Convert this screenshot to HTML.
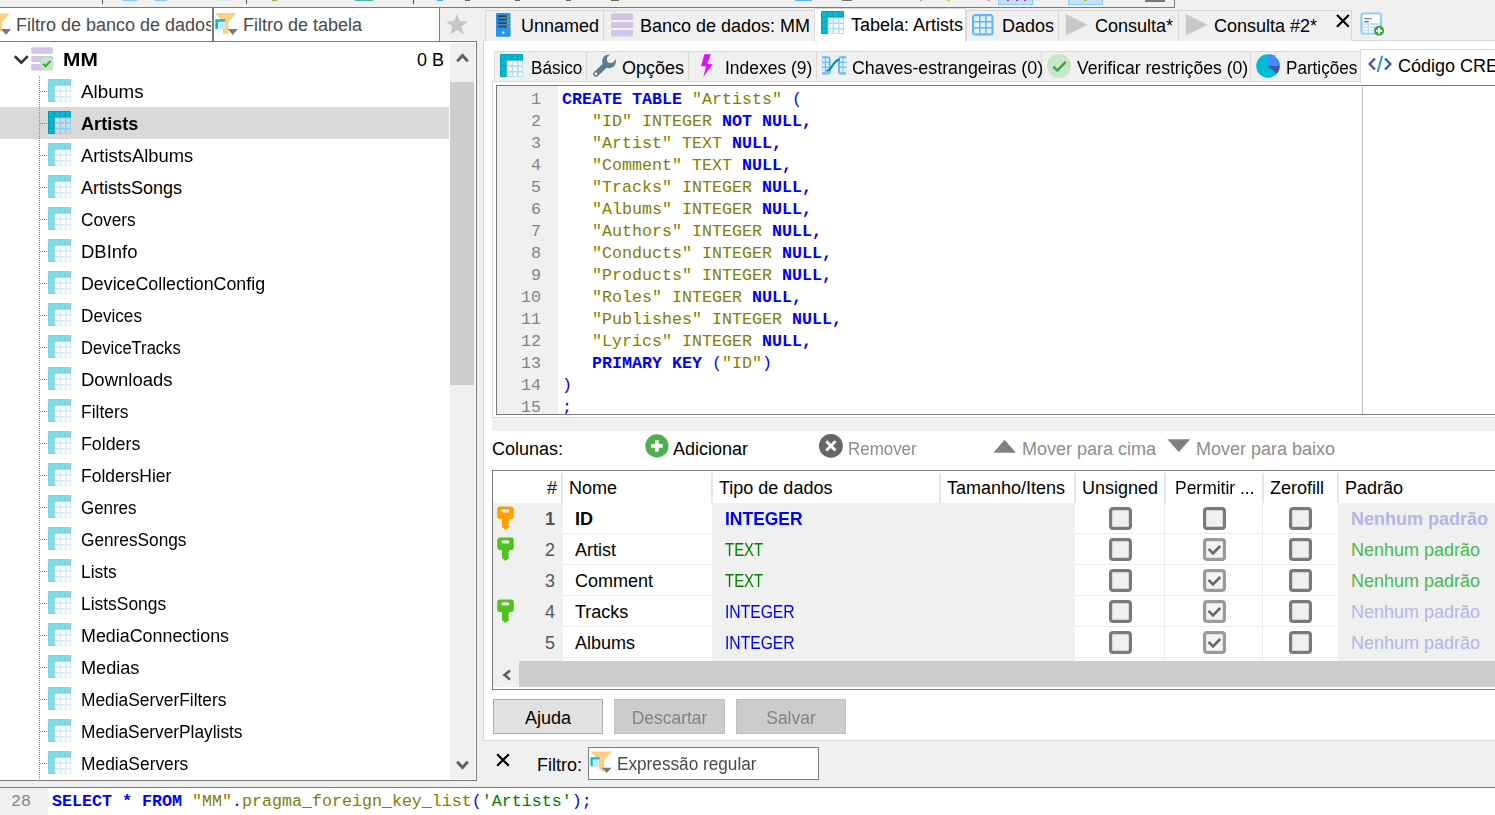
<!DOCTYPE html><html><head><meta charset="utf-8"><style>
*{box-sizing:border-box;margin:0;padding:0}
html,body{width:1495px;height:815px;overflow:hidden;background:#f0f0f0;font-family:"Liberation Sans",sans-serif;font-size:18px;color:#000}
.a{position:absolute}
.mono{font-family:"Liberation Mono",monospace}
.nw{white-space:nowrap}
svg{display:block}
.kw{color:#0000ff;font-weight:bold}
.st{color:#808000}
.sy{color:#0000ff}
</style></head><body>
<svg width="0" height="0" style="position:absolute"><defs>
<symbol id="tbl" viewBox="0 0 24 24">
<rect x="0" y="0" width="23" height="23" rx="1" fill="#72d6e3"/>
<g fill="#80deea">
<rect x="0.8" y="0.8" width="5" height="4.8"/><rect x="6.6" y="0.8" width="4.8" height="4.8"/><rect x="12.2" y="0.8" width="4.8" height="4.8"/><rect x="17.8" y="0.8" width="4.4" height="4.8"/>
<rect x="0.8" y="6.4" width="5" height="4.8"/><rect x="0.8" y="12" width="5" height="4.8"/><rect x="0.8" y="17.6" width="5" height="4.6"/>
</g>
<rect x="6.6" y="6.4" width="16.4" height="16.6" fill="#d6ebfc"/>
<g fill="#fff">
<rect x="7.6" y="7.4" width="4" height="3.8"/><rect x="13.2" y="7.4" width="3.8" height="3.8"/><rect x="18.6" y="7.4" width="3.6" height="3.8"/>
<rect x="7.6" y="13" width="4" height="3.8"/><rect x="13.2" y="13" width="3.8" height="3.8"/><rect x="18.6" y="13" width="3.6" height="3.8"/>
<rect x="7.6" y="18.6" width="4" height="3.6"/><rect x="13.2" y="18.6" width="3.8" height="3.6"/><rect x="18.6" y="18.6" width="3.6" height="3.6"/>
</g>
</symbol>
<symbol id="tblsel" viewBox="0 0 24 24">
<rect x="0" y="0" width="23" height="23" rx="1" fill="#0097a7"/>
<g fill="#00bcd4">
<rect x="0.8" y="0.8" width="5" height="4.8"/><rect x="6.6" y="0.8" width="4.8" height="4.8"/><rect x="12.2" y="0.8" width="4.8" height="4.8"/><rect x="17.8" y="0.8" width="4.4" height="4.8"/>
<rect x="0.8" y="6.4" width="5" height="4.8"/><rect x="0.8" y="12" width="5" height="4.8"/><rect x="0.8" y="17.6" width="5" height="4.6"/>
</g>
<rect x="6.6" y="6.4" width="16.4" height="16.6" fill="#90caf9"/>
<g fill="#d9d9d9">
<rect x="7.6" y="7.4" width="4" height="3.8"/><rect x="13.2" y="7.4" width="3.8" height="3.8"/><rect x="18.6" y="7.4" width="3.6" height="3.8"/>
<rect x="7.6" y="13" width="4" height="3.8"/><rect x="13.2" y="13" width="3.8" height="3.8"/><rect x="18.6" y="13" width="3.6" height="3.8"/>
<rect x="7.6" y="18.6" width="4" height="3.6"/><rect x="13.2" y="18.6" width="3.8" height="3.6"/><rect x="18.6" y="18.6" width="3.6" height="3.6"/>
</g>
</symbol>
<symbol id="tblhdr" viewBox="0 0 24 24">
<rect x="0" y="0" width="23" height="23" rx="1" fill="#0097a7"/>
<g fill="#00bcd4">
<rect x="0.8" y="0.8" width="5" height="4.8"/><rect x="6.6" y="0.8" width="4.8" height="4.8"/><rect x="12.2" y="0.8" width="4.8" height="4.8"/><rect x="17.8" y="0.8" width="4.4" height="4.8"/>
<rect x="0.8" y="6.4" width="5" height="4.8"/><rect x="0.8" y="12" width="5" height="4.8"/><rect x="0.8" y="17.6" width="5" height="4.6"/>
</g>
<rect x="6.6" y="6.4" width="16.4" height="16.6" fill="#b3dcf9"/>
<g fill="#fff">
<rect x="7.6" y="7.4" width="4" height="3.8"/><rect x="13.2" y="7.4" width="3.8" height="3.8"/><rect x="18.6" y="7.4" width="3.6" height="3.8"/>
<rect x="7.6" y="13" width="4" height="3.8"/><rect x="13.2" y="13" width="3.8" height="3.8"/><rect x="18.6" y="13" width="3.6" height="3.8"/>
<rect x="7.6" y="18.6" width="4" height="3.6"/><rect x="13.2" y="18.6" width="3.8" height="3.6"/><rect x="18.6" y="18.6" width="3.6" height="3.6"/>
</g>
</symbol>
<symbol id="key" viewBox="0 0 17 24">
<path d="M3 0.5 H14 Q16.8 0.5 16.8 3.5 V10 Q16.8 13 14 13 H12 V21 L8.5 24 L5 21 V13 H3 Q0.2 13 0.2 10 V3.5 Q0.2 0.5 3 0.5 Z" fill="currentColor"/>
<rect x="4.5" y="3.2" width="8" height="3.2" rx="1.6" fill="#f0f0f0"/>
<g fill="#f0f0f0"><rect x="11.2" y="15" width="1.2" height="1.5"/><rect x="11.2" y="18" width="1.2" height="1.5"/></g>
</symbol>
<symbol id="cbx" viewBox="0 0 23 23">
<rect x="1.6" y="1.6" width="19.8" height="19.8" rx="2.5" fill="#f0f0f0" stroke="#7a7a7a" stroke-width="3.2"/>
</symbol>
<symbol id="cbxc" viewBox="0 0 23 23">
<rect x="1.6" y="1.6" width="19.8" height="19.8" rx="2.5" fill="#f4f4f4" stroke="#9a9a9a" stroke-width="3.2"/>
<path d="M5.5 10.8 L10 15.3 L17.2 8" fill="none" stroke="#666" stroke-width="2.6"/>
</symbol>
<symbol id="tick" viewBox="0 0 24 24">
<circle cx="12" cy="12" r="11.9" fill="#c8e6c9"/>
<path d="M6.3 12.6 L10.3 16.5 L18.7 7.9" fill="none" stroke="#43a047" stroke-width="2.4"/>
</symbol>
<symbol id="funnel" viewBox="0 0 24 24">
<path d="M0 0 H22 L14 9 V21 L8 21 V9 Z" fill="#ffcc80"/>
</symbol>
</defs></svg>
<div class="a" style="left:0px;top:7px;width:1175px;height:1px;background:#7a7a7a"></div>
<div class="a" style="left:1174px;top:0px;width:1px;height:8px;background:#7a7a7a"></div>
<div class="a" style="left:102px;top:0px;width:1px;height:4px;background:#505050"></div>
<div class="a" style="left:246px;top:0px;width:1px;height:4px;background:#505050"></div>
<div class="a" style="left:413px;top:0px;width:1px;height:4px;background:#505050"></div>
<div class="a" style="left:123px;top:0px;width:14px;height:1px;background:#90caf9"></div>
<div class="a" style="left:155px;top:0px;width:12px;height:1px;background:#90caf9"></div>
<div class="a" style="left:218px;top:0px;width:15px;height:1px;background:#dde8f0"></div>
<div class="a" style="left:272px;top:0px;width:5px;height:1px;background:#8bc34a"></div>
<div class="a" style="left:355px;top:0px;width:18px;height:1px;background:#4db6ac"></div>
<div class="a" style="left:437px;top:0px;width:6px;height:1px;background:#42a5f5"></div>
<div class="a" style="left:465px;top:0px;width:5px;height:1px;background:#666"></div>
<div class="a" style="left:515px;top:0px;width:5px;height:1px;background:#666"></div>
<div class="a" style="left:566px;top:0px;width:5px;height:1px;background:#666"></div>
<div class="a" style="left:611px;top:0px;width:8px;height:1px;background:#666"></div>
<div class="a" style="left:795px;top:0px;width:17px;height:1px;background:#64b5f6"></div>
<div class="a" style="left:842px;top:0px;width:10px;height:1px;background:#707070"></div>
<div class="a" style="left:920px;top:0px;width:2px;height:1px;background:#64b5f6"></div>
<div class="a" style="left:947px;top:0px;width:3px;height:1px;background:#ffc107"></div>
<div class="a" style="left:987px;top:0px;width:3px;height:1px;background:#f48fb1"></div>
<div class="a" style="left:1145px;top:0px;width:20px;height:2px;background:#777"></div>
<div class="a" style="left:998px;top:0px;width:35px;height:5px;background:#c5dff5;border:1px solid #90caf9;border-top:none"></div>
<div class="a" style="left:1068px;top:0px;width:35px;height:5px;background:#c5dff5;border:1px solid #90caf9;border-top:none"></div>
<div class="a" style="left:1007px;top:0px;width:2px;height:1px;background:#9c27b0"></div>
<div class="a" style="left:1016px;top:0px;width:2px;height:1px;background:#9c27b0"></div>
<div class="a" style="left:1024px;top:0px;width:2px;height:1px;background:#9c27b0"></div>
<div class="a" style="left:1084px;top:0px;width:3px;height:1px;background:#8bc34a"></div>
<div class="a" style="left:0px;top:8px;width:440px;height:34px;background:#fff;border-bottom:1px solid #7a7a7a;border-right:1px solid #7a7a7a"></div>
<div class="a" style="left:212px;top:8px;width:2px;height:33px;background:#7a7a7a"></div>
<div class="a nw" style="left:16px;top:9px;width:195px;height:33px;line-height:33px;color:#4a4a4a;overflow:hidden">Filtro de banco de dados</div>
<div class="a nw" style="left:243px;top:9px;height:33px;line-height:33px;color:#4a4a4a">Filtro de tabela</div>
<svg class="a" style="left:0px;top:13px;" width="12" height="23" viewBox="0 0 12 23"><path d="M0 0.4 H9.8 L2 9 V18.5 L0 18.5 Z" fill="#ffcc80"/><path d="M1 16 H11 L6 22 Z" fill="#7a7a7a"/></svg>
<svg class="a" style="left:215px;top:13px;" width="24" height="23" viewBox="0 0 24 23"><path d="M0 0 H21.5 L13.5 9 V20.8 L8 20.8 V9 Z" fill="#ffcc80"/><rect x="0.3" y="6.2" width="9.6" height="9.6" fill="#00bcd4"/><rect x="3" y="8.8" width="7" height="7" fill="#e3f2fd"/><g stroke="#b3dcf9" stroke-width="0.8"><path d="M5.3 8.8V15.8M7.6 8.8V15.8M3 11.2H10M3 13.5H10"/></g><path d="M12.8 16 H22.8 L17.8 22 Z" fill="#7a7a7a"/></svg>
<svg class="a" style="left:445px;top:13px;" width="24" height="22" viewBox="0 0 24 22"><path d="M12 0.6 L14.9 7.9 L22.8 8.4 L16.7 13.4 L18.7 21.2 L12 16.9 L5.3 21.2 L7.3 13.4 L1.2 8.4 L9.1 7.9 Z" fill="#c6c6c6"/></svg>
<div class="a" style="left:0px;top:41px;width:477px;height:740px;background:#fff;border-top:1px solid #7a7a7a;border-right:1px solid #7a7a7a;border-bottom:1px solid #7a7a7a"></div>
<svg class="a" style="left:13px;top:52px;" width="17" height="13" viewBox="0 0 17 13"><path d="M1.8 4.2 L8.4 10.6 L14.7 4.2" fill="none" stroke="#333" stroke-width="2.6"/></svg>
<svg class="a" style="left:31px;top:47px;" width="23" height="24" viewBox="0 0 23 24"><g fill="#d1c4e9"><rect x="0.2" y="0.3" width="21.7" height="6.5" rx="1.2"/><rect x="0.2" y="9" width="21.7" height="6" rx="1.2"/><rect x="0.2" y="17" width="21.7" height="6.5" rx="1.2"/></g><circle cx="15.8" cy="16.5" r="7" fill="#c8e6c9"/><path d="M12.1 16.9 L14.5 19.3 L19.7 13.9" fill="none" stroke="#43a047" stroke-width="2"/></svg>
<div class="a nw" style="left:63px;top:44px;height:32px;line-height:32px;font-weight:bold;transform:scaleX(1.16);transform-origin:0 0">MM</div>
<div class="a nw" style="left:417px;top:44px;height:32px;line-height:32px">0 B</div>
<div class="a" style="left:40px;top:91px;width:8px;height:1px;background-image:linear-gradient(90deg,#8a8a8a 50%,transparent 50%);background-size:2px 1px"></div>
<svg class="a" style="left:48px;top:79px;" width="24" height="24"><use href="#tbl"/></svg>
<div class="a nw" style="left:81px;top:76px;height:32px;line-height:32px;transform:scaleX(1.043);transform-origin:0 0">Albums</div>
<div class="a" style="left:0px;top:107px;width:449px;height:32px;background:#d9d9d9"></div>
<div class="a" style="left:40px;top:123px;width:8px;height:1px;background-image:linear-gradient(90deg,#8a8a8a 50%,transparent 50%);background-size:2px 1px"></div>
<svg class="a" style="left:48px;top:111px;" width="24" height="24"><use href="#tblsel"/></svg>
<div class="a nw" style="left:81px;top:108px;height:32px;line-height:32px;transform:scaleX(1.007);transform-origin:0 0;font-weight:bold">Artists</div>
<div class="a" style="left:40px;top:155px;width:8px;height:1px;background-image:linear-gradient(90deg,#8a8a8a 50%,transparent 50%);background-size:2px 1px"></div>
<svg class="a" style="left:48px;top:143px;" width="24" height="24"><use href="#tbl"/></svg>
<div class="a nw" style="left:81px;top:140px;height:32px;line-height:32px;transform:scaleX(1.02);transform-origin:0 0">ArtistsAlbums</div>
<div class="a" style="left:40px;top:187px;width:8px;height:1px;background-image:linear-gradient(90deg,#8a8a8a 50%,transparent 50%);background-size:2px 1px"></div>
<svg class="a" style="left:48px;top:175px;" width="24" height="24"><use href="#tbl"/></svg>
<div class="a nw" style="left:81px;top:172px;height:32px;line-height:32px;transform:scaleX(1.0);transform-origin:0 0">ArtistsSongs</div>
<div class="a" style="left:40px;top:219px;width:8px;height:1px;background-image:linear-gradient(90deg,#8a8a8a 50%,transparent 50%);background-size:2px 1px"></div>
<svg class="a" style="left:48px;top:207px;" width="24" height="24"><use href="#tbl"/></svg>
<div class="a nw" style="left:81px;top:204px;height:32px;line-height:32px;transform:scaleX(0.96);transform-origin:0 0">Covers</div>
<div class="a" style="left:40px;top:251px;width:8px;height:1px;background-image:linear-gradient(90deg,#8a8a8a 50%,transparent 50%);background-size:2px 1px"></div>
<svg class="a" style="left:48px;top:239px;" width="24" height="24"><use href="#tbl"/></svg>
<div class="a nw" style="left:81px;top:236px;height:32px;line-height:32px;transform:scaleX(1.026);transform-origin:0 0">DBInfo</div>
<div class="a" style="left:40px;top:283px;width:8px;height:1px;background-image:linear-gradient(90deg,#8a8a8a 50%,transparent 50%);background-size:2px 1px"></div>
<svg class="a" style="left:48px;top:271px;" width="24" height="24"><use href="#tbl"/></svg>
<div class="a nw" style="left:81px;top:268px;height:32px;line-height:32px;transform:scaleX(0.989);transform-origin:0 0">DeviceCollectionConfig</div>
<div class="a" style="left:40px;top:315px;width:8px;height:1px;background-image:linear-gradient(90deg,#8a8a8a 50%,transparent 50%);background-size:2px 1px"></div>
<svg class="a" style="left:48px;top:303px;" width="24" height="24"><use href="#tbl"/></svg>
<div class="a nw" style="left:81px;top:300px;height:32px;line-height:32px;transform:scaleX(0.952);transform-origin:0 0">Devices</div>
<div class="a" style="left:40px;top:347px;width:8px;height:1px;background-image:linear-gradient(90deg,#8a8a8a 50%,transparent 50%);background-size:2px 1px"></div>
<svg class="a" style="left:48px;top:335px;" width="24" height="24"><use href="#tbl"/></svg>
<div class="a nw" style="left:81px;top:332px;height:32px;line-height:32px;transform:scaleX(0.92);transform-origin:0 0">DeviceTracks</div>
<div class="a" style="left:40px;top:379px;width:8px;height:1px;background-image:linear-gradient(90deg,#8a8a8a 50%,transparent 50%);background-size:2px 1px"></div>
<svg class="a" style="left:48px;top:367px;" width="24" height="24"><use href="#tbl"/></svg>
<div class="a nw" style="left:81px;top:364px;height:32px;line-height:32px;transform:scaleX(1.028);transform-origin:0 0">Downloads</div>
<div class="a" style="left:40px;top:411px;width:8px;height:1px;background-image:linear-gradient(90deg,#8a8a8a 50%,transparent 50%);background-size:2px 1px"></div>
<svg class="a" style="left:48px;top:399px;" width="24" height="24"><use href="#tbl"/></svg>
<div class="a nw" style="left:81px;top:396px;height:32px;line-height:32px;transform:scaleX(0.968);transform-origin:0 0">Filters</div>
<div class="a" style="left:40px;top:443px;width:8px;height:1px;background-image:linear-gradient(90deg,#8a8a8a 50%,transparent 50%);background-size:2px 1px"></div>
<svg class="a" style="left:48px;top:431px;" width="24" height="24"><use href="#tbl"/></svg>
<div class="a nw" style="left:81px;top:428px;height:32px;line-height:32px;transform:scaleX(0.988);transform-origin:0 0">Folders</div>
<div class="a" style="left:40px;top:475px;width:8px;height:1px;background-image:linear-gradient(90deg,#8a8a8a 50%,transparent 50%);background-size:2px 1px"></div>
<svg class="a" style="left:48px;top:463px;" width="24" height="24"><use href="#tbl"/></svg>
<div class="a nw" style="left:81px;top:460px;height:32px;line-height:32px;transform:scaleX(0.971);transform-origin:0 0">FoldersHier</div>
<div class="a" style="left:40px;top:507px;width:8px;height:1px;background-image:linear-gradient(90deg,#8a8a8a 50%,transparent 50%);background-size:2px 1px"></div>
<svg class="a" style="left:48px;top:495px;" width="24" height="24"><use href="#tbl"/></svg>
<div class="a nw" style="left:81px;top:492px;height:32px;line-height:32px;transform:scaleX(0.939);transform-origin:0 0">Genres</div>
<div class="a" style="left:40px;top:539px;width:8px;height:1px;background-image:linear-gradient(90deg,#8a8a8a 50%,transparent 50%);background-size:2px 1px"></div>
<svg class="a" style="left:48px;top:527px;" width="24" height="24"><use href="#tbl"/></svg>
<div class="a nw" style="left:81px;top:524px;height:32px;line-height:32px;transform:scaleX(0.958);transform-origin:0 0">GenresSongs</div>
<div class="a" style="left:40px;top:571px;width:8px;height:1px;background-image:linear-gradient(90deg,#8a8a8a 50%,transparent 50%);background-size:2px 1px"></div>
<svg class="a" style="left:48px;top:559px;" width="24" height="24"><use href="#tbl"/></svg>
<div class="a nw" style="left:81px;top:556px;height:32px;line-height:32px;transform:scaleX(0.963);transform-origin:0 0">Lists</div>
<div class="a" style="left:40px;top:603px;width:8px;height:1px;background-image:linear-gradient(90deg,#8a8a8a 50%,transparent 50%);background-size:2px 1px"></div>
<svg class="a" style="left:48px;top:591px;" width="24" height="24"><use href="#tbl"/></svg>
<div class="a nw" style="left:81px;top:588px;height:32px;line-height:32px;transform:scaleX(0.967);transform-origin:0 0">ListsSongs</div>
<div class="a" style="left:40px;top:635px;width:8px;height:1px;background-image:linear-gradient(90deg,#8a8a8a 50%,transparent 50%);background-size:2px 1px"></div>
<svg class="a" style="left:48px;top:623px;" width="24" height="24"><use href="#tbl"/></svg>
<div class="a nw" style="left:81px;top:620px;height:32px;line-height:32px;transform:scaleX(0.993);transform-origin:0 0">MediaConnections</div>
<div class="a" style="left:40px;top:667px;width:8px;height:1px;background-image:linear-gradient(90deg,#8a8a8a 50%,transparent 50%);background-size:2px 1px"></div>
<svg class="a" style="left:48px;top:655px;" width="24" height="24"><use href="#tbl"/></svg>
<div class="a nw" style="left:81px;top:652px;height:32px;line-height:32px;transform:scaleX(1.007);transform-origin:0 0">Medias</div>
<div class="a" style="left:40px;top:699px;width:8px;height:1px;background-image:linear-gradient(90deg,#8a8a8a 50%,transparent 50%);background-size:2px 1px"></div>
<svg class="a" style="left:48px;top:687px;" width="24" height="24"><use href="#tbl"/></svg>
<div class="a nw" style="left:81px;top:684px;height:32px;line-height:32px;transform:scaleX(0.963);transform-origin:0 0">MediaServerFilters</div>
<div class="a" style="left:40px;top:731px;width:8px;height:1px;background-image:linear-gradient(90deg,#8a8a8a 50%,transparent 50%);background-size:2px 1px"></div>
<svg class="a" style="left:48px;top:719px;" width="24" height="24"><use href="#tbl"/></svg>
<div class="a nw" style="left:81px;top:716px;height:32px;line-height:32px;transform:scaleX(0.961);transform-origin:0 0">MediaServerPlaylists</div>
<div class="a" style="left:40px;top:763px;width:8px;height:1px;background-image:linear-gradient(90deg,#8a8a8a 50%,transparent 50%);background-size:2px 1px"></div>
<svg class="a" style="left:48px;top:751px;" width="24" height="24"><use href="#tbl"/></svg>
<div class="a nw" style="left:81px;top:748px;height:32px;line-height:32px;transform:scaleX(0.966);transform-origin:0 0">MediaServers</div>
<div class="a" style="left:39px;top:76px;width:1px;height:704px;background-image:linear-gradient(#8a8a8a 50%,transparent 50%);background-size:1px 2px"></div>
<div class="a" style="left:450px;top:43px;width:25px;height:736px;background:#f0f0f0"></div>
<div class="a" style="left:450px;top:82px;width:24px;height:303px;background:#cdcdcd"></div>
<svg class="a" style="left:455px;top:51px;" width="16" height="13" viewBox="0 0 16 13"><path d="M2.2 10.2 L7.5 4.5 L12.8 10.2" fill="none" stroke="#606060" stroke-width="3"/></svg>
<svg class="a" style="left:455px;top:759px;" width="16" height="13" viewBox="0 0 16 13"><path d="M2.2 2.8 L7.5 8.5 L12.8 2.8" fill="none" stroke="#606060" stroke-width="3"/></svg>
<div class="a" style="left:477px;top:8px;width:6px;height:773px;background:#f0f0f0"></div>
<div class="a" style="left:483px;top:40px;width:1012px;height:701px;background:#fff;border-left:1px solid #d9d9d9;border-top:1px solid #d9d9d9;border-bottom:1px solid #d9d9d9"></div>
<div class="a" style="left:485px;top:10px;width:119px;height:31px;background:#f0f0f0;border:1px solid #d9d9d9;border-bottom:none"></div>
<div class="a nw" style="left:521px;top:10px;height:32px;line-height:32px">Unnamed</div>
<div class="a" style="left:603px;top:10px;width:212px;height:31px;background:#f0f0f0;border:1px solid #d9d9d9;border-bottom:none"></div>
<div class="a nw" style="left:640px;top:10px;height:32px;line-height:32px">Banco de dados: MM</div>
<div class="a" style="left:814px;top:8px;width:152px;height:34px;background:#fff;border:1px solid #d9d9d9;border-bottom:none"></div>
<div class="a nw" style="left:851px;top:9px;height:33px;line-height:33px">Tabela: Artists</div>
<div class="a" style="left:966px;top:10px;width:93px;height:31px;background:#f0f0f0;border:1px solid #d9d9d9;border-bottom:none"></div>
<div class="a nw" style="left:1002px;top:10px;height:32px;line-height:32px">Dados</div>
<div class="a" style="left:1058px;top:10px;width:121px;height:31px;background:#f0f0f0;border:1px solid #d9d9d9;border-bottom:none"></div>
<div class="a nw" style="left:1095px;top:10px;height:32px;line-height:32px">Consulta*</div>
<div class="a" style="left:1178px;top:10px;width:174px;height:31px;background:#f0f0f0;border:1px solid #d9d9d9;border-bottom:none"></div>
<div class="a nw" style="left:1214px;top:10px;height:32px;line-height:32px">Consulta #2*</div>
<svg class="a" style="left:496px;top:13px;" width="15" height="24" viewBox="0 0 15 24"><rect x="0" y="0" width="14.5" height="23.7" rx="1" fill="#2196f3"/><g fill="#37474f"><rect x="1.8" y="2.2" width="11" height="1.9"/><rect x="1.8" y="5.7" width="11" height="1.9"/><rect x="1.8" y="9.2" width="11" height="1.9"/><rect x="1.8" y="12.7" width="11" height="1.9"/></g><g fill="#8bc34a"><rect x="11" y="2.2" width="1.8" height="1.9"/><rect x="11" y="5.7" width="1.8" height="1.9"/><rect x="11" y="9.2" width="1.8" height="1.9"/><rect x="11" y="12.7" width="1.8" height="1.9"/></g><circle cx="7.2" cy="19.6" r="1.2" fill="#e3f2fd"/></svg>
<svg class="a" style="left:611px;top:13px;" width="23" height="24" viewBox="0 0 23 24"><g fill="#d1c4e9"><rect x="0" y="0.5" width="22" height="6.5" rx="1.2"/><rect x="0" y="9" width="22" height="6" rx="1.2"/><rect x="0" y="17" width="22" height="6.5" rx="1.2"/></g></svg>
<svg class="a" style="left:821px;top:11px;" width="24" height="24"><use href="#tblhdr"/></svg>
<svg class="a" style="left:971px;top:13px;" width="24" height="24" viewBox="0 0 24 24"><rect x="1" y="1" width="21.6" height="21.6" rx="3.6" fill="#64b5f6"/><g fill="#e3f2fd"><rect x="3.2" y="3.2" width="4.8" height="4.8"/><rect x="9.5" y="3.2" width="4.6" height="4.8"/><rect x="15.6" y="3.2" width="4.8" height="4.8"/><rect x="3.2" y="9.5" width="4.8" height="4.6"/><rect x="9.5" y="9.5" width="4.6" height="4.6"/><rect x="15.6" y="9.5" width="4.8" height="4.6"/><rect x="3.2" y="15.6" width="4.8" height="4.8"/><rect x="9.5" y="15.6" width="4.6" height="4.8"/><rect x="15.6" y="15.6" width="4.8" height="4.8"/></g></svg>
<svg class="a" style="left:1065px;top:13px;" width="24" height="24" viewBox="0 0 24 24"><path d="M0.8 1 L22.5 11.8 L0.8 22.7 Z" fill="#c8c8c8"/></svg>
<svg class="a" style="left:1185px;top:13px;" width="24" height="24" viewBox="0 0 24 24"><path d="M0.8 1 L22.5 11.8 L0.8 22.7 Z" fill="#c8c8c8"/></svg>
<svg class="a" style="left:1335px;top:13px;" width="16" height="16" viewBox="0 0 16 16"><path d="M2 2 L13.8 13.8 M13.8 2 L2 13.8" stroke="#000" stroke-width="2.2"/></svg>
<svg class="a" style="left:1359px;top:11px;" width="28" height="28" viewBox="0 0 28 28"><rect x="2.5" y="2.5" width="19.5" height="20" rx="2.2" fill="none" stroke="#90caf9" stroke-width="2.2"/><rect x="3.6" y="3.6" width="17.3" height="8.6" fill="#fff"/><path d="M5.3 7.8H12.8M5.3 10.6H9.8" stroke="#546e7a" stroke-width="1.1"/><rect x="3.6" y="12.2" width="17.3" height="9.7" fill="#bbdefb"/><g fill="#fff"><rect x="4.2" y="13.8" width="4.5" height="1.8"/><rect x="10.1" y="13.8" width="4.5" height="1.8"/><rect x="16" y="13.8" width="4.5" height="1.8"/><rect x="4.2" y="17" width="4.5" height="1.8"/><rect x="10.1" y="17" width="4.5" height="1.8"/><rect x="4.2" y="20" width="4.5" height="1.6"/><rect x="10.1" y="20" width="4.5" height="1.6"/></g><circle cx="20.1" cy="19.8" r="5" fill="#43a047"/><path d="M20.1 16.8V22.8M17.1 19.8H23.1" stroke="#fff" stroke-width="1.9"/></svg>
<div class="a" style="left:494px;top:51px;width:93px;height:31px;background:#f0f0f0;border:1px solid #d9d9d9;border-bottom:none"></div>
<div class="a" style="left:586px;top:51px;width:103px;height:31px;background:#f0f0f0;border:1px solid #d9d9d9;border-bottom:none"></div>
<div class="a" style="left:688px;top:51px;width:129px;height:31px;background:#f0f0f0;border:1px solid #d9d9d9;border-bottom:none"></div>
<div class="a" style="left:816px;top:51px;width:226px;height:31px;background:#f0f0f0;border:1px solid #d9d9d9;border-bottom:none"></div>
<div class="a" style="left:1041px;top:51px;width:210px;height:31px;background:#f0f0f0;border:1px solid #d9d9d9;border-bottom:none"></div>
<div class="a" style="left:1250px;top:51px;width:111px;height:31px;background:#f0f0f0;border:1px solid #d9d9d9;border-bottom:none"></div>
<div class="a nw" style="left:531px;top:53px;height:31px;line-height:31px;transform:scaleX(0.95);transform-origin:0 0">B&aacute;sico</div>
<div class="a nw" style="left:622px;top:53px;height:31px;line-height:31px;transform:scaleX(1);transform-origin:0 0">Op&ccedil;&otilde;es</div>
<div class="a nw" style="left:725px;top:53px;height:31px;line-height:31px;transform:scaleX(0.97);transform-origin:0 0">Indexes (9)</div>
<div class="a nw" style="left:852px;top:53px;height:31px;line-height:31px;transform:scaleX(0.99);transform-origin:0 0">Chaves-estrangeiras (0)</div>
<div class="a nw" style="left:1077px;top:53px;height:31px;line-height:31px;transform:scaleX(0.978);transform-origin:0 0">Verificar restri&ccedil;&otilde;es (0)</div>
<div class="a nw" style="left:1286px;top:53px;height:31px;line-height:31px;transform:scaleX(0.95);transform-origin:0 0">Parti&ccedil;&otilde;es</div>
<div class="a" style="left:492px;top:81px;width:1003px;height:337px;background:#fff;border-left:1px solid #d9d9d9;border-top:1px solid #d9d9d9;border-bottom:1px solid #d9d9d9"></div>
<div class="a" style="left:1360px;top:49px;width:135px;height:34px;background:#fff;border-left:1px solid #d9d9d9;border-top:1px solid #d9d9d9"></div>
<div class="a nw" style="left:1398px;top:50px;height:32px;line-height:32px;transform:scaleX(1.0);transform-origin:0 0">C&oacute;digo CREATE</div>
<svg class="a" style="left:500px;top:54px;" width="24" height="24"><use href="#tblhdr"/></svg>
<svg class="a" style="left:590px;top:52px" width="30" height="28" viewBox="0 0 30 28"><defs><mask id="wm" maskUnits="userSpaceOnUse" x="-5" y="-5" width="40" height="40"><rect x="-5" y="-5" width="40" height="40" fill="#fff"/><circle cx="20.6" cy="7.2" r="3.7" fill="#000"/><path d="M23.2 9.8 L31 2 L26 -3 L18 4.6 Z" fill="#000"/></mask></defs><g fill="#607d8b" mask="url(#wm)"><circle cx="19" cy="9.4" r="6.9"/><path d="M6 22 L16.5 12" stroke="#607d8b" stroke-width="5.6" stroke-linecap="round"/></g><circle cx="6" cy="21.9" r="1.3" fill="#fff"/></svg>
<svg class="a" style="left:698px;top:52px;" width="20" height="28" viewBox="0 0 20 28"><path d="M6.4 2.2 L12.9 2.2 L9.1 11.9 L14.6 12.2 L5.2 25.1 L8.1 14.4 L3.1 14.1 Z" fill="#e010f5"/></svg>
<svg class="a" style="left:822px;top:56px;" width="25" height="20" viewBox="0 0 25 20"><path d="M0 0.3 H5.5 Q8.6 0.3 8.6 3.5 V15.2 Q8.6 18.5 5.5 18.5 H0 Z" fill="#64b5f6"/><path d="M16 3.5 Q16 0.3 19 0.3 H24.2 V18.5 H19 Q16 18.5 16 15.2 Z" fill="#64b5f6"/><g fill="#e3f2fd"><rect x="0.3" y="2.2" width="2.6" height="3.6"/><rect x="3.9" y="2.2" width="2.8" height="3.6"/><rect x="0.3" y="7" width="2.6" height="3.6"/><rect x="3.9" y="7" width="2.8" height="3.6"/><rect x="0.3" y="11.8" width="2.6" height="4.6"/><rect x="3.9" y="11.8" width="2.8" height="4.6"/><rect x="17.9" y="2.2" width="2.6" height="3.6"/><rect x="21.4" y="2.2" width="2.6" height="3.6"/><rect x="17.9" y="7" width="2.6" height="3.6"/><rect x="21.4" y="7" width="2.6" height="3.6"/><rect x="17.9" y="11.8" width="2.6" height="4.6"/><rect x="21.4" y="11.8" width="2.6" height="4.6"/></g><path d="M5.2 14.6 C10 14.6 11 4.2 16.8 3.8" fill="none" stroke="#00979d" stroke-width="2.2" stroke-linecap="round"/></svg>
<svg class="a" style="left:1047px;top:54px;" width="24" height="24"><use href="#tick"/></svg>
<svg class="a" style="left:1256px;top:54px;" width="24" height="24" viewBox="0 0 24 24"><circle cx="12" cy="12" r="11.8" fill="#00bcd4"/><path d="M12 12 V0.2 A11.8 11.8 0 0 1 23.8 12 Z" fill="#448aff"/><path d="M12 12 H23.8 A11.8 11.8 0 0 1 20.9 19.7 Z" fill="#3f51b5"/></svg>
<svg class="a" style="left:1368px;top:55px;" width="24" height="18" viewBox="0 0 24 18"><path d="M7 3.5 L1.6 9 L7 14.5 M17 3.5 L22.4 9 L17 14.5" fill="none" stroke="#3f51b5" stroke-width="2.3"/><path d="M14.2 0.8 L9.6 17" stroke="#2196f3" stroke-width="2"/></svg>
<div class="a" style="left:496px;top:85px;width:999px;height:330px;background:#fff;border-left:1px solid #7a7a7a;border-top:1px solid #7a7a7a;border-bottom:1px solid #7a7a7a"></div>
<div class="a" style="left:497px;top:86px;width:61px;height:328px;background:#f0f0f0"></div>
<div class="a" style="left:1362px;top:87px;width:1px;height:327px;background:#c0c0c0"></div>
<div class="a" style="left:497px;top:86px;width:865px;height:328px;overflow:hidden">
<div class="a mono nw" style="left:0;top:3px;width:44px;text-align:right;font-size:16.67px;height:22px;line-height:22px;color:#848484">1</div>
<div class="a mono nw" style="left:65px;top:3px;font-size:16.67px;height:22px;line-height:22px;white-space:pre"><span class="kw">CREATE</span> <span class="kw">TABLE</span> <span class="st">"Artists"</span> <span class="sy">(</span></div>
<div class="a mono nw" style="left:0;top:25px;width:44px;text-align:right;font-size:16.67px;height:22px;line-height:22px;color:#848484">2</div>
<div class="a mono nw" style="left:65px;top:25px;font-size:16.67px;height:22px;line-height:22px;white-space:pre">   <span class="st">"ID" INTEGER</span> <span class="kw">NOT</span> <span class="kw">NULL</span><span class="kw">,</span></div>
<div class="a mono nw" style="left:0;top:47px;width:44px;text-align:right;font-size:16.67px;height:22px;line-height:22px;color:#848484">3</div>
<div class="a mono nw" style="left:65px;top:47px;font-size:16.67px;height:22px;line-height:22px;white-space:pre">   <span class="st">"Artist" TEXT</span> <span class="kw">NULL</span><span class="kw">,</span></div>
<div class="a mono nw" style="left:0;top:69px;width:44px;text-align:right;font-size:16.67px;height:22px;line-height:22px;color:#848484">4</div>
<div class="a mono nw" style="left:65px;top:69px;font-size:16.67px;height:22px;line-height:22px;white-space:pre">   <span class="st">"Comment" TEXT</span> <span class="kw">NULL</span><span class="kw">,</span></div>
<div class="a mono nw" style="left:0;top:91px;width:44px;text-align:right;font-size:16.67px;height:22px;line-height:22px;color:#848484">5</div>
<div class="a mono nw" style="left:65px;top:91px;font-size:16.67px;height:22px;line-height:22px;white-space:pre">   <span class="st">"Tracks" INTEGER</span> <span class="kw">NULL</span><span class="kw">,</span></div>
<div class="a mono nw" style="left:0;top:113px;width:44px;text-align:right;font-size:16.67px;height:22px;line-height:22px;color:#848484">6</div>
<div class="a mono nw" style="left:65px;top:113px;font-size:16.67px;height:22px;line-height:22px;white-space:pre">   <span class="st">"Albums" INTEGER</span> <span class="kw">NULL</span><span class="kw">,</span></div>
<div class="a mono nw" style="left:0;top:135px;width:44px;text-align:right;font-size:16.67px;height:22px;line-height:22px;color:#848484">7</div>
<div class="a mono nw" style="left:65px;top:135px;font-size:16.67px;height:22px;line-height:22px;white-space:pre">   <span class="st">"Authors" INTEGER</span> <span class="kw">NULL</span><span class="kw">,</span></div>
<div class="a mono nw" style="left:0;top:157px;width:44px;text-align:right;font-size:16.67px;height:22px;line-height:22px;color:#848484">8</div>
<div class="a mono nw" style="left:65px;top:157px;font-size:16.67px;height:22px;line-height:22px;white-space:pre">   <span class="st">"Conducts" INTEGER</span> <span class="kw">NULL</span><span class="kw">,</span></div>
<div class="a mono nw" style="left:0;top:179px;width:44px;text-align:right;font-size:16.67px;height:22px;line-height:22px;color:#848484">9</div>
<div class="a mono nw" style="left:65px;top:179px;font-size:16.67px;height:22px;line-height:22px;white-space:pre">   <span class="st">"Products" INTEGER</span> <span class="kw">NULL</span><span class="kw">,</span></div>
<div class="a mono nw" style="left:0;top:201px;width:44px;text-align:right;font-size:16.67px;height:22px;line-height:22px;color:#848484">10</div>
<div class="a mono nw" style="left:65px;top:201px;font-size:16.67px;height:22px;line-height:22px;white-space:pre">   <span class="st">"Roles" INTEGER</span> <span class="kw">NULL</span><span class="kw">,</span></div>
<div class="a mono nw" style="left:0;top:223px;width:44px;text-align:right;font-size:16.67px;height:22px;line-height:22px;color:#848484">11</div>
<div class="a mono nw" style="left:65px;top:223px;font-size:16.67px;height:22px;line-height:22px;white-space:pre">   <span class="st">"Publishes" INTEGER</span> <span class="kw">NULL</span><span class="kw">,</span></div>
<div class="a mono nw" style="left:0;top:245px;width:44px;text-align:right;font-size:16.67px;height:22px;line-height:22px;color:#848484">12</div>
<div class="a mono nw" style="left:65px;top:245px;font-size:16.67px;height:22px;line-height:22px;white-space:pre">   <span class="st">"Lyrics" INTEGER</span> <span class="kw">NULL</span><span class="kw">,</span></div>
<div class="a mono nw" style="left:0;top:267px;width:44px;text-align:right;font-size:16.67px;height:22px;line-height:22px;color:#848484">13</div>
<div class="a mono nw" style="left:65px;top:267px;font-size:16.67px;height:22px;line-height:22px;white-space:pre">   <span class="kw">PRIMARY</span> <span class="kw">KEY</span> <span class="sy">(</span><span class="st">"ID"</span><span class="sy">)</span></div>
<div class="a mono nw" style="left:0;top:289px;width:44px;text-align:right;font-size:16.67px;height:22px;line-height:22px;color:#848484">14</div>
<div class="a mono nw" style="left:65px;top:289px;font-size:16.67px;height:22px;line-height:22px;white-space:pre"><span class="sy">)</span></div>
<div class="a mono nw" style="left:0;top:311px;width:44px;text-align:right;font-size:16.67px;height:22px;line-height:22px;color:#848484">15</div>
<div class="a mono nw" style="left:65px;top:311px;font-size:16.67px;height:22px;line-height:22px;white-space:pre"><span class="sy">;</span></div>
</div>
<div class="a" style="left:492px;top:418px;width:1003px;height:13px;background:#f0f0f0"></div>
<div class="a nw" style="left:492px;top:434px;height:30px;line-height:30px">Colunas:</div>
<svg class="a" style="left:644px;top:434px;" width="26" height="25" viewBox="0 0 26 25"><circle cx="12.9" cy="11.9" r="11.6" fill="#4caf50"/><path d="M12.9 6.2V17.7M7.1 11.9H18.7" stroke="#fff" stroke-width="3.8"/></svg>
<div class="a nw" style="left:673px;top:434px;height:30px;line-height:30px">Adicionar</div>
<svg class="a" style="left:818px;top:434px;" width="26" height="25" viewBox="0 0 26 25"><circle cx="12.9" cy="11.9" r="11.9" fill="#666"/><path d="M8.3 7.3L17.5 16.5M17.5 7.3L8.3 16.5" stroke="#fff" stroke-width="3"/></svg>
<div class="a nw" style="left:848px;top:434px;height:30px;line-height:30px;color:#8d8d8d;transform:scaleX(0.94);transform-origin:0 0">Remover</div>
<svg class="a" style="left:993px;top:439px;" width="24" height="14" viewBox="0 0 24 14"><path d="M0.5 13.8 L11.5 0.7 L23 13.8 Z" fill="#808080"/></svg>
<div class="a nw" style="left:1022px;top:434px;height:30px;line-height:30px;color:#8d8d8d">Mover para cima</div>
<svg class="a" style="left:1167px;top:439px;" width="24" height="14" viewBox="0 0 24 14"><path d="M0.3 0.2 L23.3 0.2 L11.8 13 Z" fill="#808080"/></svg>
<div class="a nw" style="left:1196px;top:434px;height:30px;line-height:30px;color:#8d8d8d">Mover para baixo</div>
<div class="a" style="left:492px;top:470px;width:1003px;height:220px;background:#fff;border-left:1px solid #7a7a7a;border-top:1px solid #7a7a7a;border-bottom:1px solid #7a7a7a"></div>
<div class="a nw" style="left:493px;top:472px;width:64px;text-align:right;height:32px;line-height:32px">#</div>
<div class="a" style="left:561px;top:473px;width:2px;height:30px;background:#e6e6e6"></div>
<div class="a nw" style="left:569px;top:472px;height:32px;line-height:32px">Nome</div>
<div class="a" style="left:711px;top:473px;width:2px;height:30px;background:#e6e6e6"></div>
<div class="a nw" style="left:719px;top:472px;height:32px;line-height:32px">Tipo de dados</div>
<div class="a" style="left:939px;top:473px;width:2px;height:30px;background:#e6e6e6"></div>
<div class="a nw" style="left:947px;top:472px;height:32px;line-height:32px">Tamanho/Itens</div>
<div class="a" style="left:1074px;top:473px;width:2px;height:30px;background:#e6e6e6"></div>
<div class="a nw" style="left:1082px;top:472px;height:32px;line-height:32px">Unsigned</div>
<div class="a" style="left:1164px;top:473px;width:2px;height:30px;background:#e6e6e6"></div>
<div class="a nw" style="left:1175px;top:472px;height:32px;line-height:32px;transform:scaleX(0.97);transform-origin:0 0">Permitir ...</div>
<div class="a" style="left:1262px;top:473px;width:2px;height:30px;background:#e6e6e6"></div>
<div class="a nw" style="left:1270px;top:472px;height:32px;line-height:32px">Zerofill</div>
<div class="a" style="left:1337px;top:473px;width:2px;height:30px;background:#e6e6e6"></div>
<div class="a nw" style="left:1345px;top:472px;height:32px;line-height:32px">Padr&atilde;o</div>
<div class="a" style="left:493px;top:503px;width:1002px;height:158px;overflow:hidden">
<div class="a" style="left:0px;top:0px;width:70px;height:31px;background:#f0f0f0"></div>
<div class="a" style="left:219px;top:0px;width:363px;height:31px;background:#f0f0f0"></div>
<div class="a" style="left:845px;top:0px;width:157px;height:31px;background:#f0f0f0"></div>
<div class="a" style="left:70px;top:30px;width:149px;height:1px;background:#ededed"></div>
<div class="a" style="left:582px;top:30px;width:263px;height:1px;background:#ededed"></div>
<div class="a" style="left:671px;top:0px;width:1px;height:31px;background:#ededed"></div>
<div class="a" style="left:769px;top:0px;width:1px;height:31px;background:#ededed"></div>
<svg class="a" style="left:4px;top:3px;color:#ffa000" width="17" height="24"><use href="#key"/></svg>
<div class="a nw" style="left:0;top:1px;width:62px;text-align:right;height:31px;line-height:31px;color:#555;font-weight:bold">1</div>
<div class="a nw" style="left:82px;top:1px;height:31px;line-height:31px;font-weight:bold">ID</div>
<div class="a nw" style="left:232px;top:1px;height:31px;line-height:31px;color:#0000ff;font-weight:bold;transform:scaleX(0.97);transform-origin:0 0">INTEGER</div>
<div class="a nw" style="left:858px;top:1px;height:31px;line-height:31px;color:#b4b4e6;font-weight:bold">Nenhum padr&atilde;o</div>
<svg class="a" style="left:616px;top:4px;" width="23" height="23"><use href="#cbx"/></svg>
<svg class="a" style="left:710px;top:4px;" width="23" height="23"><use href="#cbx"/></svg>
<svg class="a" style="left:796px;top:4px;" width="23" height="23"><use href="#cbx"/></svg>
<div class="a" style="left:0px;top:31px;width:70px;height:31px;background:#f0f0f0"></div>
<div class="a" style="left:219px;top:31px;width:363px;height:31px;background:#f0f0f0"></div>
<div class="a" style="left:845px;top:31px;width:157px;height:31px;background:#f0f0f0"></div>
<div class="a" style="left:70px;top:61px;width:149px;height:1px;background:#ededed"></div>
<div class="a" style="left:582px;top:61px;width:263px;height:1px;background:#ededed"></div>
<div class="a" style="left:671px;top:31px;width:1px;height:31px;background:#ededed"></div>
<div class="a" style="left:769px;top:31px;width:1px;height:31px;background:#ededed"></div>
<svg class="a" style="left:4px;top:34px;color:#4fc21b" width="17" height="24"><use href="#key"/></svg>
<div class="a nw" style="left:0;top:32px;width:62px;text-align:right;height:31px;line-height:31px;color:#555">2</div>
<div class="a nw" style="left:82px;top:32px;height:31px;line-height:31px">Artist</div>
<div class="a nw" style="left:232px;top:32px;height:31px;line-height:31px;color:#008000;transform:scaleX(0.83);transform-origin:0 0">TEXT</div>
<div class="a nw" style="left:858px;top:32px;height:31px;line-height:31px;color:#4cb84c">Nenhum padr&atilde;o</div>
<svg class="a" style="left:616px;top:35px;" width="23" height="23"><use href="#cbx"/></svg>
<svg class="a" style="left:710px;top:35px;" width="23" height="23"><use href="#cbxc"/></svg>
<svg class="a" style="left:796px;top:35px;" width="23" height="23"><use href="#cbx"/></svg>
<div class="a" style="left:0px;top:62px;width:70px;height:31px;background:#f0f0f0"></div>
<div class="a" style="left:219px;top:62px;width:363px;height:31px;background:#f0f0f0"></div>
<div class="a" style="left:845px;top:62px;width:157px;height:31px;background:#f0f0f0"></div>
<div class="a" style="left:70px;top:92px;width:149px;height:1px;background:#ededed"></div>
<div class="a" style="left:582px;top:92px;width:263px;height:1px;background:#ededed"></div>
<div class="a" style="left:671px;top:62px;width:1px;height:31px;background:#ededed"></div>
<div class="a" style="left:769px;top:62px;width:1px;height:31px;background:#ededed"></div>
<div class="a nw" style="left:0;top:63px;width:62px;text-align:right;height:31px;line-height:31px;color:#555">3</div>
<div class="a nw" style="left:82px;top:63px;height:31px;line-height:31px">Comment</div>
<div class="a nw" style="left:232px;top:63px;height:31px;line-height:31px;color:#008000;transform:scaleX(0.83);transform-origin:0 0">TEXT</div>
<div class="a nw" style="left:858px;top:63px;height:31px;line-height:31px;color:#4cb84c">Nenhum padr&atilde;o</div>
<svg class="a" style="left:616px;top:66px;" width="23" height="23"><use href="#cbx"/></svg>
<svg class="a" style="left:710px;top:66px;" width="23" height="23"><use href="#cbxc"/></svg>
<svg class="a" style="left:796px;top:66px;" width="23" height="23"><use href="#cbx"/></svg>
<div class="a" style="left:0px;top:93px;width:70px;height:31px;background:#f0f0f0"></div>
<div class="a" style="left:219px;top:93px;width:363px;height:31px;background:#f0f0f0"></div>
<div class="a" style="left:845px;top:93px;width:157px;height:31px;background:#f0f0f0"></div>
<div class="a" style="left:70px;top:123px;width:149px;height:1px;background:#ededed"></div>
<div class="a" style="left:582px;top:123px;width:263px;height:1px;background:#ededed"></div>
<div class="a" style="left:671px;top:93px;width:1px;height:31px;background:#ededed"></div>
<div class="a" style="left:769px;top:93px;width:1px;height:31px;background:#ededed"></div>
<svg class="a" style="left:4px;top:96px;color:#4fc21b" width="17" height="24"><use href="#key"/></svg>
<div class="a nw" style="left:0;top:94px;width:62px;text-align:right;height:31px;line-height:31px;color:#555">4</div>
<div class="a nw" style="left:82px;top:94px;height:31px;line-height:31px">Tracks</div>
<div class="a nw" style="left:232px;top:94px;height:31px;line-height:31px;color:#0000ff;transform:scaleX(0.87);transform-origin:0 0">INTEGER</div>
<div class="a nw" style="left:858px;top:94px;height:31px;line-height:31px;color:#b4b4e6">Nenhum padr&atilde;o</div>
<svg class="a" style="left:616px;top:97px;" width="23" height="23"><use href="#cbx"/></svg>
<svg class="a" style="left:710px;top:97px;" width="23" height="23"><use href="#cbxc"/></svg>
<svg class="a" style="left:796px;top:97px;" width="23" height="23"><use href="#cbx"/></svg>
<div class="a" style="left:0px;top:124px;width:70px;height:31px;background:#f0f0f0"></div>
<div class="a" style="left:219px;top:124px;width:363px;height:31px;background:#f0f0f0"></div>
<div class="a" style="left:845px;top:124px;width:157px;height:31px;background:#f0f0f0"></div>
<div class="a" style="left:70px;top:154px;width:149px;height:1px;background:#ededed"></div>
<div class="a" style="left:582px;top:154px;width:263px;height:1px;background:#ededed"></div>
<div class="a" style="left:671px;top:124px;width:1px;height:31px;background:#ededed"></div>
<div class="a" style="left:769px;top:124px;width:1px;height:31px;background:#ededed"></div>
<div class="a nw" style="left:0;top:125px;width:62px;text-align:right;height:31px;line-height:31px;color:#555">5</div>
<div class="a nw" style="left:82px;top:125px;height:31px;line-height:31px">Albums</div>
<div class="a nw" style="left:232px;top:125px;height:31px;line-height:31px;color:#0000ff;transform:scaleX(0.87);transform-origin:0 0">INTEGER</div>
<div class="a nw" style="left:858px;top:125px;height:31px;line-height:31px;color:#b4b4e6">Nenhum padr&atilde;o</div>
<svg class="a" style="left:616px;top:128px;" width="23" height="23"><use href="#cbx"/></svg>
<svg class="a" style="left:710px;top:128px;" width="23" height="23"><use href="#cbxc"/></svg>
<svg class="a" style="left:796px;top:128px;" width="23" height="23"><use href="#cbx"/></svg>
<div class="a" style="left:0px;top:155px;width:70px;height:31px;background:#f0f0f0"></div>
<div class="a" style="left:219px;top:155px;width:363px;height:31px;background:#f0f0f0"></div>
<div class="a" style="left:845px;top:155px;width:157px;height:31px;background:#f0f0f0"></div>
<div class="a" style="left:70px;top:185px;width:149px;height:1px;background:#ededed"></div>
<div class="a" style="left:582px;top:185px;width:263px;height:1px;background:#ededed"></div>
<div class="a" style="left:671px;top:155px;width:1px;height:31px;background:#ededed"></div>
<div class="a" style="left:769px;top:155px;width:1px;height:31px;background:#ededed"></div>
<svg class="a" style="left:4px;top:158px;color:#4fc21b" width="17" height="24"><use href="#key"/></svg>
<div class="a nw" style="left:0;top:156px;width:62px;text-align:right;height:31px;line-height:31px;color:#555">6</div>
<div class="a nw" style="left:82px;top:156px;height:31px;line-height:31px"></div>
<div class="a nw" style="left:232px;top:156px;height:31px;line-height:31px;color:#008000;transform:scaleX(0.83);transform-origin:0 0"></div>
<div class="a nw" style="left:858px;top:156px;height:31px;line-height:31px;color:#4cb84c"></div>
<svg class="a" style="left:616px;top:159px;" width="23" height="23"><use href="#cbx"/></svg>
<svg class="a" style="left:710px;top:159px;" width="23" height="23"><use href="#cbxc"/></svg>
<svg class="a" style="left:796px;top:159px;" width="23" height="23"><use href="#cbx"/></svg>
</div>
<div class="a" style="left:493px;top:661px;width:1002px;height:26px;background:#cdcdcd"></div>
<div class="a" style="left:493px;top:661px;width:26px;height:26px;background:#f0f0f0"></div>
<svg class="a" style="left:500px;top:668px;" width="14" height="14" viewBox="0 0 14 14"><path d="M10 2.5 L4.5 7 L10 11.5" fill="none" stroke="#606060" stroke-width="2.6"/></svg>
<div class="a" style="left:493px;top:699px;width:110px;height:35px;background:#e1e1e1;border:1px solid #adadad"></div>
<div class="a nw" style="left:493px;top:701px;width:110px;text-align:center;height:35px;line-height:35px">Ajuda</div>
<div class="a" style="left:614px;top:699px;width:111px;height:35px;background:#cccccc;border:1px solid #bfbfbf"></div>
<div class="a nw" style="left:614px;top:701px;width:111px;text-align:center;height:35px;line-height:35px;color:#838383;transform:scaleX(0.97)">Descartar</div>
<div class="a" style="left:736px;top:699px;width:110px;height:35px;background:#cccccc;border:1px solid #bfbfbf"></div>
<div class="a nw" style="left:736px;top:701px;width:110px;text-align:center;height:35px;line-height:35px;color:#838383;transform:scaleX(0.97)">Salvar</div>
<svg class="a" style="left:496px;top:753px;" width="14" height="14" viewBox="0 0 14 14"><path d="M1.2 1.2 L12.8 12.8 M12.8 1.2 L1.2 12.8" stroke="#000" stroke-width="2.2"/></svg>
<div class="a nw" style="left:537px;top:749px;height:32px;line-height:32px">Filtro:</div>
<div class="a" style="left:588px;top:747px;width:231px;height:33px;background:#fff;border:1px solid #7a7a7a"></div>
<svg class="a" style="left:590px;top:751px;" width="24" height="24" viewBox="0 0 24 24"><path d="M0.6 0.6 H21.7 L14 9.4 V21.2 L9.2 17.8 V9.4 Z" fill="#ffcc80"/><rect x="0.5" y="6.2" width="9" height="9" fill="#00bcd4"/><rect x="2.8" y="8.5" width="6.7" height="6.7" fill="#e3f2fd"/><g stroke="#b3dcf9" stroke-width="0.7"><path d="M5 8.5V15.2M7.3 8.5V15.2M2.8 10.7H9.5M2.8 13H9.5"/></g><path d="M11.8 16.8 H21.6 L16.7 22 Z" fill="#7a7a7a"/></svg>
<div class="a nw" style="left:617px;top:748px;height:32px;line-height:32px;color:#4a4a4a;transform:scaleX(0.955);transform-origin:0 0">Express&atilde;o regular</div>
<div class="a" style="left:0px;top:787px;width:1495px;height:1px;background:#7a7a7a"></div>
<div class="a" style="left:0px;top:788px;width:1495px;height:27px;background:#fff"></div>
<div class="a" style="left:0px;top:788px;width:48px;height:27px;background:#f0f0f0"></div>
<div class="a mono nw" style="left:0;top:790px;width:31px;text-align:right;font-size:16.67px;height:24px;line-height:24px;color:#848484">28</div>
<div class="a mono nw" style="left:52px;top:790px;font-size:16.67px;height:24px;line-height:24px;white-space:pre"><span class="kw">SELECT</span> <span class="kw">*</span> <span class="kw">FROM</span> <span class="st">"MM"</span><span class="sy">.</span><span class="st">pragma_foreign_key_list</span><span class="sy">(</span><span style="color:#008000">'Artists'</span><span class="sy">);</span></div>
</body></html>
